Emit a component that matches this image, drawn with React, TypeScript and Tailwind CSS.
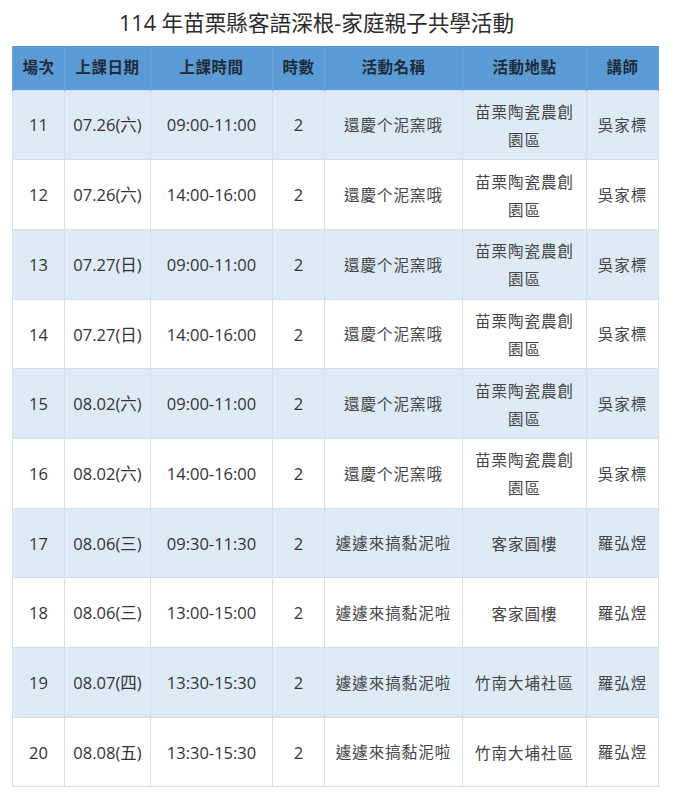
import React from "react";

type Row = { no: string; date: string; time: string; hrs: string; name: string; place: string[]; teacher: string };

const rows: Row[] = [
  { no: "11", date: "07.26(六)", time: "09:00-11:00", hrs: "2", name: "還慶个泥窯哦", place: ["苗栗陶瓷農創", "園區"], teacher: "吳家標" },
  { no: "12", date: "07.26(六)", time: "14:00-16:00", hrs: "2", name: "還慶个泥窯哦", place: ["苗栗陶瓷農創", "園區"], teacher: "吳家標" },
  { no: "13", date: "07.27(日)", time: "09:00-11:00", hrs: "2", name: "還慶个泥窯哦", place: ["苗栗陶瓷農創", "園區"], teacher: "吳家標" },
  { no: "14", date: "07.27(日)", time: "14:00-16:00", hrs: "2", name: "還慶个泥窯哦", place: ["苗栗陶瓷農創", "園區"], teacher: "吳家標" },
  { no: "15", date: "08.02(六)", time: "09:00-11:00", hrs: "2", name: "還慶个泥窯哦", place: ["苗栗陶瓷農創", "園區"], teacher: "吳家標" },
  { no: "16", date: "08.02(六)", time: "14:00-16:00", hrs: "2", name: "還慶个泥窯哦", place: ["苗栗陶瓷農創", "園區"], teacher: "吳家標" },
  { no: "17", date: "08.06(三)", time: "09:30-11:30", hrs: "2", name: "遽遽來搞黏泥啦", place: ["客家圓樓"], teacher: "羅弘煜" },
  { no: "18", date: "08.06(三)", time: "13:00-15:00", hrs: "2", name: "遽遽來搞黏泥啦", place: ["客家圓樓"], teacher: "羅弘煜" },
  { no: "19", date: "08.07(四)", time: "13:30-15:30", hrs: "2", name: "遽遽來搞黏泥啦", place: ["竹南大埔社區"], teacher: "羅弘煜" },
  { no: "20", date: "08.08(五)", time: "13:30-15:30", hrs: "2", name: "遽遽來搞黏泥啦", place: ["竹南大埔社區"], teacher: "羅弘煜" },
];

const headers = ["場次", "上課日期", "上課時間", "時數", "活動名稱", "活動地點", "講師"];
const widths = ["w-[52px]", "w-[86px]", "w-[122px]", "w-[52px]", "w-[138px]", "w-[124px]", "w-[72px]"];

export default function App() {
  return (
    <div
      className="w-[676px] h-[800px] bg-white text-[#333]"
      style={{ fontFamily: '"Open Sans", "Noto Sans CJK TC", sans-serif' }}
    >
      <div className="h-[46px] flex items-center justify-center pr-[43px] text-[21.6px] text-[#2b2b2b] pt-[1px] whitespace-nowrap">
        114 年苗栗縣客語深根-家庭親子共學活動
      </div>
      <div className="px-[12px]">
        <table className="w-[646px] border-collapse table-fixed">
          <colgroup>
            {widths.map((w, i) => (
              <col key={i} className={w} />
            ))}
          </colgroup>
          <thead>
            <tr className="h-[44px] bg-[#5b9bd5]">
              {headers.map((h, i) => (
                <th
                  key={i}
                  className="border-x border-[#6fa6da] text-[15.5px] font-bold text-[#1d2b3a] text-center align-middle p-0 tracking-[0.5px]"
                >
                  {h}
                </th>
              ))}
            </tr>
          </thead>
          <tbody>
            {rows.map((r, idx) => (
              <tr key={r.no} className={`h-[69.7px] ${idx % 2 === 0 ? "bg-[#deebf7]" : "bg-white"}`}>
                <td className="border border-[#d3dfeb] text-center text-[16.5px] p-0 pt-[2px]">{r.no}</td>
                <td className="border border-[#d3dfeb] text-center text-[16.5px] p-0 pt-[2px] whitespace-nowrap">{r.date}</td>
                <td className="border border-[#d3dfeb] text-center text-[16.5px] p-0 pt-[2px]">{r.time}</td>
                <td className="border border-[#d3dfeb] text-center text-[16.5px] p-0 pt-[2px]">{r.hrs}</td>
                <td className="border border-[#d3dfeb] text-center text-[15.5px] text-[#444] p-0 pt-[2px] tracking-[1px] whitespace-nowrap">{r.name}</td>
                <td className="border border-[#d3dfeb] text-center text-[15.5px] text-[#444] p-0 pt-[2px] leading-[28px] tracking-[1px] whitespace-nowrap">
                  {r.place.map((p, i) => (
                    <div key={i}>{p}</div>
                  ))}
                </td>
                <td className="border border-[#d3dfeb] text-center text-[15.5px] text-[#444] p-0 pt-[2px] tracking-[1px]">{r.teacher}</td>
              </tr>
            ))}
          </tbody>
        </table>
      </div>
    </div>
  );
}
